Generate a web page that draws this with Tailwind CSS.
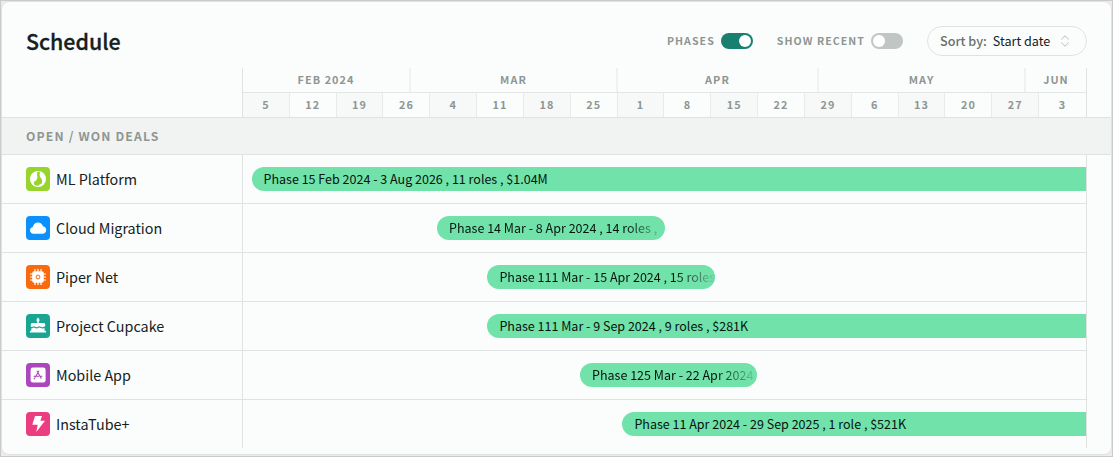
<!DOCTYPE html>
<html lang="en">
<head>
<meta charset="utf-8">
<title>Schedule</title>
<script src="https://cdn.jsdelivr.net/npm/@tailwindcss/browser@4"></script>
</head>
<body class="h-[457px] w-[1113px] overflow-hidden border border-[#cacaca] bg-[#ececec] font-['Noto_Sans_CJK_SC',sans-serif] text-[#14211d]">
<main class="flex h-[454px] w-[1111px] flex-col overflow-hidden rounded-lg border border-[#e0e2e1] bg-[#fbfdfc]">
  <header class="flex h-[66px] shrink-0 items-center pt-[13px] pr-6 pl-6">
    <h1 class="text-[21.4px] leading-8 font-medium -mt-px [-webkit-text-stroke:0.3px]">Schedule</h1>
    <div class="-mt-px ml-auto flex items-center text-[10.6px] font-bold tracking-[1.05px] text-[#8e9693]">
      <span>PHASES</span>
      <span class="ml-[6px] flex h-4 w-8 items-center justify-end rounded-full bg-[#178070] px-0.5"><span class="size-3 rounded-full bg-white"></span></span>
      <span class="ml-6">SHOW RECENT</span>
      <span class="ml-[6px] flex h-4 w-8 items-center rounded-full bg-[#c1c6c4] px-0.5"><span class="size-3 rounded-full bg-white"></span></span>
    </div>
    <button class="-mt-px ml-6 flex h-[30px] w-40 items-center rounded-full border border-[#dfe2e1] pl-3 text-[12.6px] tracking-normal">
      <span class="font-medium text-[#68716e]">Sort by:</span>
      <span class="ml-1.5">Start date</span>
      <svg class="ml-[10px]" width="10" height="12" viewBox="0 0 10 12" fill="none" stroke="#b9bfbc" stroke-width="1"><path d="M1.2 4.5 5 .8l3.8 3.7M1.2 7.5 5 11.2l3.8-3.7"/></svg>
    </button>
  </header>

  <div class="flex h-[49px] shrink-0">
    <div class="w-60 shrink-0"></div>
    <div class="w-[845px] border-x border-[#e0e3e2] text-[10.9px] font-bold tracking-[1.05px] text-[#8e9693]">
      <div class="grid h-[25px] grid-cols-[168px_207px_201px_207px_60px] border-b border-[#e3e6e5] text-center leading-[22px]">
        <div class="border-r-2 border-[#f0f2f1]">FEB 2024</div>
        <div class="border-r-2 border-[#f0f2f1]">MAR</div>
        <div class="border-r-2 border-[#f0f2f1]">APR</div>
        <div class="border-r-2 border-[#f0f2f1]">MAY</div>
        <div>JUN</div>
      </div>
      <div class="grid h-6 grid-cols-18 divide-x divide-[#e8ebea] text-center leading-[22px]">
        <div class="bg-[#f7f9f8]">5</div><div>12</div><div class="bg-[#f7f9f8]">19</div><div>26</div>
        <div class="bg-[#f7f9f8]">4</div><div>11</div><div class="bg-[#f7f9f8]">18</div><div>25</div>
        <div class="bg-[#f7f9f8]">1</div><div>8</div><div class="bg-[#f7f9f8]">15</div><div>22</div>
        <div class="bg-[#f7f9f8]">29</div><div>6</div><div class="bg-[#f7f9f8]">13</div><div>20</div>
        <div class="bg-[#f7f9f8]">27</div><div>3</div>
      </div>
    </div>
  </div>

  <h2 class="flex h-[38px] shrink-0 items-center border-y border-[#dfe2e1] bg-[#f1f3f2] pl-6 text-[12.2px] font-bold tracking-[1.15px] text-[#8e9693]">OPEN / WON DEALS</h2>

  <section class="flex h-[293px] shrink-0">
    <div class="w-60 shrink-0 divide-y divide-[#dfe2e1] text-[14.35px]">
      <div class="flex h-[49px] items-center pl-6">
        <svg class="mr-1.5 size-6" viewBox="0 0 24 24"><rect width="24" height="24" rx="4" fill="#98d52c"/><circle cx="12" cy="12" r="8" fill="#fff"/><path d="M11.300 5.300l2.200-.9.500 1.400-.5 1.400.5 2.600 1.500 2 .8 2.400-.7 2.600-1.800.4-.8 1.400-3 .2-2.200-1.700.3-2.300 2.500-1.900.9-3-.6-2z" fill="#98d52c"/></svg>
        <span>ML Platform</span>
      </div>
      <div class="flex h-[49px] items-center pl-6">
        <svg class="mr-1.5 size-6" viewBox="0 0 24 24"><rect width="24" height="24" rx="4" fill="#0b91fe"/><path d="M7.6 17.8C5.500 17.800 4 16.300 4 14.300c0-1.800 1.200-3.100 2.800-3.400C7.300 8.200 9.300 6.400 12 6.400c2.400 0 4.300 1.500 5 3.900 1.900.3 3.200 1.800 3.200 3.700 0 2.200-1.600 3.800-3.800 3.800z" fill="#fff"/></svg>
        <span>Cloud Migration</span>
      </div>
      <div class="flex h-[49px] items-center pl-6">
        <svg class="mr-1.5 size-6" viewBox="0 0 24 24"><rect width="24" height="24" rx="4" fill="#f9690e"/><path d="M9 4v16M12 4v16M15 4v16M4 9h16M4 12h16M4 15h16" stroke="#fff" stroke-width="1.2"/><rect x="6.200" y="6.200" width="11.600" height="11.600" rx="2" fill="#fff"/><circle cx="12" cy="12" r="1.900" fill="none" stroke="#f9690e" stroke-width="1"/></svg>
        <span>Piper Net</span>
      </div>
      <div class="flex h-[49px] items-center pl-6">
        <svg class="mr-1.5 size-6" viewBox="0 0 24 24"><rect width="24" height="24" rx="4" fill="#18a693"/><path d="M12 3.600c1 1.200 1.500 1.900 1.500 2.600a1.500 1.500 0 0 1-3 0c0-.7.500-1.400 1.500-2.600zM11.300 7h1.400v2h4.800c1.100 0 1.700.7 1.700 1.700v1.500c-1.200 0-1.500 1-2.800 1-1.500 0-1.700-1-2.900-1s-1.400 1-2.800 1-1.700-1-2.900-1-1.200.8-2.100.8c-.5 0-.9-.2-.9-.6v-1.700c0-1 .6-1.700 1.700-1.700h4.800zM5.300 14.200c1.300.2 1.500-.8 2.500-.8s1.400 1 2.900 1 1.700-1 2.800-1 1.400 1 2.900 1c1 0 1.500-.4 2.100-.7v3.100H20V18.600H4v-1.800h1.300z" fill="#fff"/></svg>
        <span>Project Cupcake</span>
      </div>
      <div class="flex h-[49px] items-center pl-6">
        <svg class="mr-1.5 size-6" viewBox="0 0 24 24"><rect width="24" height="24" rx="4" fill="#ab47bc"/><rect x="4.600" y="4.600" width="15" height="15" rx="2.400" fill="#fff"/><path d="M11.200 8.200l3.900 7M12.800 8.200l-3.600 6M8 13.300h4.600M14.700 13.300H16M8.500 15.300l-.4.500" stroke="#ab47bc" stroke-width="1.100" stroke-linecap="round" fill="none"/></svg>
        <span>Mobile App</span>
      </div>
      <div class="flex h-[48px] items-center pl-6">
        <svg class="mr-1.5 size-6" viewBox="0 0 24 24"><rect width="24" height="24" rx="4" fill="#ec3d81"/><path d="M9 4h7l-1.600 4.800H19L10.300 20l1.400-7.200H6.300z" fill="#fff"/></svg>
        <span>InstaTube+</span>
      </div>
    </div>
    <div class="w-[845px] divide-y divide-[#dfe2e1] overflow-hidden border-x border-[#dfe2e1] text-[12.53px] leading-6 whitespace-nowrap text-[#06140e]">
      <div class="h-[49px] py-3"><div class="ml-[8.5px] h-6 rounded-l-full bg-[#71e2aa] pl-3">Phase 15 Feb 2024 - 3 Aug 2026 , 11 roles , $1.04M</div></div>
      <div class="h-[49px] py-3"><div class="ml-[194px] h-6 w-[228px] overflow-hidden rounded-full bg-[#71e2aa] pl-3"><span class="block bg-linear-to-r from-[#06140e] from-[174px] to-[#71e2aa] to-[218px] bg-clip-text text-transparent">Phase 14 Mar - 8 Apr 2024 , 14 roles ,</span></div></div>
      <div class="h-[49px] py-3"><div class="ml-[244.4px] h-6 w-[228px] overflow-hidden rounded-full bg-[#71e2aa] pl-3"><span class="block bg-linear-to-r from-[#06140e] from-[174px] to-[#71e2aa] to-[218px] bg-clip-text text-transparent">Phase 111 Mar - 15 Apr 2024 , 15 roles</span></div></div>
      <div class="h-[49px] py-3"><div class="ml-[244.4px] h-6 rounded-l-full bg-[#71e2aa] pl-3">Phase 111 Mar - 9 Sep 2024 , 9 roles , $281K</div></div>
      <div class="h-[49px] py-3"><div class="ml-[337px] h-6 w-[177px] overflow-hidden rounded-full bg-[#71e2aa] pl-3"><span class="block bg-linear-to-r from-[#06140e] from-[122px] to-[#71e2aa] to-[166px] bg-clip-text text-transparent">Phase 125 Mar - 22 Apr 2024</span></div></div>
      <div class="h-[48px] py-3"><div class="ml-[379.4px] h-6 rounded-l-full bg-[#71e2aa] pl-3">Phase 11 Apr 2024 - 29 Sep 2025 , 1 role , $521K</div></div>
    </div>
  </section>
</main>
</body>
</html>
